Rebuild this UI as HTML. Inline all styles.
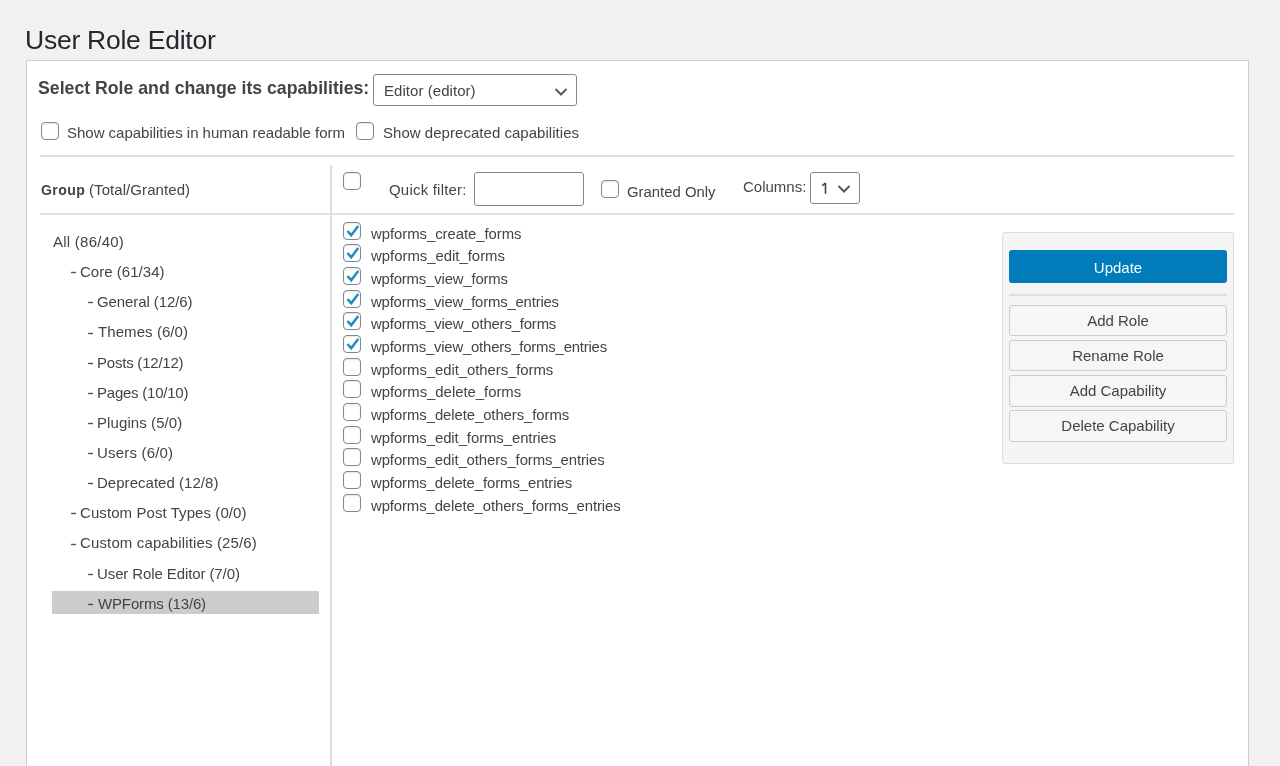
<!DOCTYPE html>
<html><head><meta charset="utf-8">
<style>
*{box-sizing:border-box;margin:0;padding:0}
html,body{width:1280px;height:766px;overflow:hidden;background:#f1f1f1;font-family:"Liberation Sans",sans-serif;color:#444}
.a{position:absolute;white-space:nowrap;will-change:transform}
.t{position:absolute;white-space:nowrap;line-height:20px;height:20px;will-change:transform}
.cb{position:absolute;width:18px;height:18px;border:1px solid #7e8993;border-radius:4px;background:#fff;box-shadow:inset 0 1px 2px rgba(0,0,0,.1)}
.cb svg{position:absolute;left:-1px;top:-1px}
.sel{position:absolute;border:1px solid #7e8993;border-radius:3px;background:#fff}
.hr{position:absolute;height:2px;background:#e0e0e0}
.btn{position:absolute;will-change:transform;left:1009px;width:218px;border:1px solid #ccc;border-radius:3px;background:#f6f6f6;text-align:center;font-size:15px;color:#444}
</style></head><body>
<div class="a" style="left:24.7px;top:23.8px;font-size:26.5px;line-height:32px;color:#23282d;letter-spacing:-0.245px">User Role Editor</div>
<div class="a" style="left:26px;top:60px;width:1223px;height:720px;background:#fff;border:1px solid #ccd0d4"></div>

<div class="a" style="left:38px;top:76.3px;font-size:17.7px;line-height:24px;font-weight:bold;color:#444">Select Role and change its capabilities:</div>
<div class="sel" style="left:373px;top:74px;width:204px;height:32px"></div>
<div class="t" style="left:384px;top:80.80px;font-size:15px;letter-spacing:0.054px;">Editor (editor)</div>
<svg class="a" style="left:553px;top:85.7px" width="16" height="12" viewBox="0 0 16 12"><path d="M2.5 3 L8 8.5 L13.5 3" fill="none" stroke="#50575e" stroke-width="2"/></svg>

<div class="cb" style="left:41px;top:122px"></div>
<div class="t" style="left:67.3px;top:123.20px;font-size:15px;letter-spacing:-0.014px;">Show capabilities in human readable form</div>
<div class="cb" style="left:356px;top:122px"></div>
<div class="t" style="left:382.5px;top:123.20px;font-size:15px;letter-spacing:0.034px;">Show deprecated capabilities</div>

<div class="hr" style="left:40px;top:155px;width:1194px"></div>
<div class="hr" style="left:40px;top:213px;width:1194px"></div>
<div class="a" style="left:330px;top:165px;width:2px;height:610px;background:#dddddd"></div>

<div class="t" style="left:40.6px;top:179.86px;font-size:14.1px;letter-spacing:0.390px;font-weight:bold">Group</div>
<div class="t" style="left:88.9px;top:179.55px;font-size:15px;letter-spacing:0.071px;">(Total/Granted)</div>

<div class="cb" style="left:343px;top:172px"></div>
<div class="t" style="left:389.3px;top:179.80px;font-size:15px;letter-spacing:0.203px;">Quick filter:</div>
<div class="sel" style="left:474px;top:172px;width:110px;height:34px"></div>
<div class="cb" style="left:601px;top:180px"></div>
<div class="t" style="left:627px;top:181.64px;font-size:14.9px;letter-spacing:-0.004px;">Granted Only</div>
<div class="t" style="left:743px;top:177.10px;font-size:15px;">Columns:</div>
<div class="sel" style="left:810px;top:172px;width:50px;height:32px"></div>
<svg class="a" style="left:818px;top:180px" width="14" height="16" viewBox="0 0 14 16"><path d="M7.5 3 V13.8 M4.2 5.6 L7.5 3.2" fill="none" stroke="#444" stroke-width="1.6"/></svg>
<svg class="a" style="left:836px;top:182.9px" width="16" height="12" viewBox="0 0 16 12"><path d="M2.5 3 L8 8.5 L13.5 3" fill="none" stroke="#50575e" stroke-width="2"/></svg>

<div class="cb" style="left:343px;top:222px"><svg width="18" height="18" viewBox="0 0 18 18"><path d="M4.5 9 L8.2 13.2 L15.2 4" fill="none" stroke="#1e8cbe" stroke-width="2.5"/></svg></div>
<div class="t" style="left:370.7px;top:223.54px;font-size:14.9px;letter-spacing:-0.051px;">wpforms_create_forms</div>
<div class="cb" style="left:343px;top:244px"><svg width="18" height="18" viewBox="0 0 18 18"><path d="M4.5 9 L8.2 13.2 L15.2 4" fill="none" stroke="#1e8cbe" stroke-width="2.5"/></svg></div>
<div class="t" style="left:370.7px;top:246.21px;font-size:14.9px;letter-spacing:-0.007px;">wpforms_edit_forms</div>
<div class="cb" style="left:343px;top:267px"><svg width="18" height="18" viewBox="0 0 18 18"><path d="M4.5 9 L8.2 13.2 L15.2 4" fill="none" stroke="#1e8cbe" stroke-width="2.5"/></svg></div>
<div class="t" style="left:370.7px;top:268.88px;font-size:14.9px;letter-spacing:-0.165px;">wpforms_view_forms</div>
<div class="cb" style="left:343px;top:290px"><svg width="18" height="18" viewBox="0 0 18 18"><path d="M4.5 9 L8.2 13.2 L15.2 4" fill="none" stroke="#1e8cbe" stroke-width="2.5"/></svg></div>
<div class="t" style="left:370.7px;top:291.55px;font-size:14.9px;letter-spacing:-0.190px;">wpforms_view_forms_entries</div>
<div class="cb" style="left:343px;top:312px"><svg width="18" height="18" viewBox="0 0 18 18"><path d="M4.5 9 L8.2 13.2 L15.2 4" fill="none" stroke="#1e8cbe" stroke-width="2.5"/></svg></div>
<div class="t" style="left:370.7px;top:314.22px;font-size:14.9px;letter-spacing:-0.175px;">wpforms_view_others_forms</div>
<div class="cb" style="left:343px;top:335px"><svg width="18" height="18" viewBox="0 0 18 18"><path d="M4.5 9 L8.2 13.2 L15.2 4" fill="none" stroke="#1e8cbe" stroke-width="2.5"/></svg></div>
<div class="t" style="left:370.7px;top:336.89px;font-size:14.9px;letter-spacing:-0.198px;">wpforms_view_others_forms_entries</div>
<div class="cb" style="left:343px;top:358px"></div>
<div class="t" style="left:370.7px;top:359.56px;font-size:14.9px;letter-spacing:-0.063px;">wpforms_edit_others_forms</div>
<div class="cb" style="left:343px;top:380px"></div>
<div class="t" style="left:370.7px;top:382.23px;font-size:14.9px;letter-spacing:-0.023px;">wpforms_delete_forms</div>
<div class="cb" style="left:343px;top:403px"></div>
<div class="t" style="left:370.7px;top:404.90px;font-size:14.9px;letter-spacing:-0.082px;">wpforms_delete_others_forms</div>
<div class="cb" style="left:343px;top:426px"></div>
<div class="t" style="left:370.7px;top:427.57px;font-size:14.9px;letter-spacing:-0.074px;">wpforms_edit_forms_entries</div>
<div class="cb" style="left:343px;top:448px"></div>
<div class="t" style="left:370.7px;top:450.24px;font-size:14.9px;letter-spacing:-0.094px;">wpforms_edit_others_forms_entries</div>
<div class="cb" style="left:343px;top:471px"></div>
<div class="t" style="left:370.7px;top:472.91px;font-size:14.9px;letter-spacing:-0.093px;">wpforms_delete_forms_entries</div>
<div class="cb" style="left:343px;top:494px"></div>
<div class="t" style="left:370.7px;top:495.58px;font-size:14.9px;letter-spacing:-0.108px;">wpforms_delete_others_forms_entries</div>
<div class="t" style="left:53.34px;top:232.00px;font-size:15px;letter-spacing:0.248px;">All (86/40)</div>
<svg class="a" style="left:69px;top:269.34px" width="10" height="8"><rect x="2.1" y="2.80" width="4.9" height="1.4" fill="#505050"/></svg>
<div class="t" style="left:79.63999999999999px;top:262.14px;font-size:15px;letter-spacing:0.033px;">Core (61/34)</div>
<svg class="a" style="left:86px;top:299.48px" width="10" height="8"><rect x="2.1" y="2.80" width="4.9" height="1.4" fill="#505050"/></svg>
<div class="t" style="left:97.0px;top:292.28px;font-size:15px;letter-spacing:-0.092px;">General (12/6)</div>
<svg class="a" style="left:86px;top:329.62px" width="10" height="8"><rect x="2.1" y="2.80" width="4.9" height="1.4" fill="#505050"/></svg>
<div class="t" style="left:98.32px;top:322.42px;font-size:15px;letter-spacing:0.076px;">Themes (6/0)</div>
<svg class="a" style="left:86px;top:359.76px" width="10" height="8"><rect x="2.1" y="2.80" width="4.9" height="1.4" fill="#505050"/></svg>
<div class="t" style="left:97.11999999999999px;top:352.56px;font-size:15px;letter-spacing:-0.220px;">Posts (12/12)</div>
<svg class="a" style="left:86px;top:389.90px" width="10" height="8"><rect x="2.1" y="2.80" width="4.9" height="1.4" fill="#505050"/></svg>
<div class="t" style="left:97.11999999999999px;top:382.70px;font-size:15px;letter-spacing:-0.230px;">Pages (10/10)</div>
<svg class="a" style="left:86px;top:420.04px" width="10" height="8"><rect x="2.1" y="2.80" width="4.9" height="1.4" fill="#505050"/></svg>
<div class="t" style="left:97.11999999999999px;top:412.84px;font-size:15px;letter-spacing:0.090px;">Plugins (5/0)</div>
<svg class="a" style="left:86px;top:450.18px" width="10" height="8"><rect x="2.1" y="2.80" width="4.9" height="1.4" fill="#505050"/></svg>
<div class="t" style="left:97.11999999999999px;top:442.98px;font-size:15px;letter-spacing:0.192px;">Users (6/0)</div>
<svg class="a" style="left:86px;top:480.32px" width="10" height="8"><rect x="2.1" y="2.80" width="4.9" height="1.4" fill="#505050"/></svg>
<div class="t" style="left:97.11999999999999px;top:473.12px;font-size:15px;letter-spacing:0.030px;">Deprecated (12/8)</div>
<svg class="a" style="left:69px;top:510.46px" width="10" height="8"><rect x="2.1" y="2.80" width="4.9" height="1.4" fill="#505050"/></svg>
<div class="t" style="left:79.63999999999999px;top:503.26px;font-size:15px;letter-spacing:0.076px;">Custom Post Types (0/0)</div>
<svg class="a" style="left:69px;top:540.60px" width="10" height="8"><rect x="2.1" y="2.80" width="4.9" height="1.4" fill="#505050"/></svg>
<div class="t" style="left:79.63999999999999px;top:533.40px;font-size:15px;letter-spacing:0.134px;">Custom capabilities (25/6)</div>
<svg class="a" style="left:86px;top:570.74px" width="10" height="8"><rect x="2.1" y="2.80" width="4.9" height="1.4" fill="#505050"/></svg>
<div class="t" style="left:97.48px;top:563.54px;font-size:15px;letter-spacing:-0.103px;">User Role Editor (7/0)</div>
<div class="a" style="left:52px;top:591px;width:267px;height:23px;background:#ccc"></div>
<svg class="a" style="left:86px;top:600.88px" width="10" height="8"><rect x="2.1" y="2.80" width="4.9" height="1.4" fill="#505050"/></svg>
<div class="t" style="left:98.2px;top:593.68px;font-size:15px;letter-spacing:-0.148px;">WPForms (13/6)</div>

<div class="a" style="left:1002px;top:232px;width:232px;height:232px;background:#f5f5f5;border:1px solid #ddd;border-radius:3px"></div>
<div class="a" style="left:1009px;top:250px;width:218px;height:33px;background:#007cba;border-radius:3px"></div>
<div class="t" style="left:1009px;width:218px;top:257.70px;font-size:15px;color:#fff;text-align:center">Update</div>
<div class="a" style="left:1009px;top:294px;width:218px;height:1px;background:#e0e0e0"></div><div class="a" style="left:1009px;top:295px;width:218px;height:1px;background:#dedede"></div>
<div class="btn" style="top:305px;height:31px;line-height:29px">Add Role</div>
<div class="btn" style="top:340px;height:31px;line-height:29px">Rename Role</div>
<div class="btn" style="top:375px;height:32px;line-height:30px">Add Capability</div>
<div class="btn" style="top:410px;height:32px;line-height:30px">Delete Capability</div>
</body></html>
